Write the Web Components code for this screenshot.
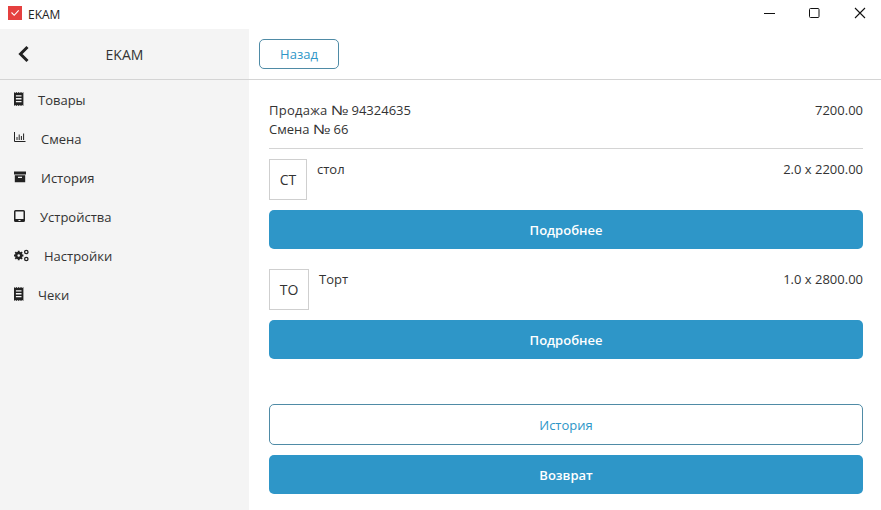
<!DOCTYPE html>
<html lang="ru">
<head>
<meta charset="utf-8">
<title>EKAM</title>
<style>
  html, body { margin: 0; height: 100%; background: #fff; }
  body { font-family: "Open Sans", "Liberation Sans", sans-serif; color: #333; overflow: hidden; }
</style>
</head>
<body>
<ekam-app></ekam-app>

<script>
const ICONS = {
  receipt: '<path fill="#222" fill-rule="evenodd" d="M0 0l1.200 1L2.400 0l1.100 1L4.700 0l1.200 1L7 0l1.200 1L9.400 0v14l-1.200-1L7 14l-1.100-1-1.200 1-1.200-1-1.100 1-1.200-1L0 14zM1.900 3.200v1.300h5.600V3.200zm0 2.900v1.300h5.600V6.100zm0 2.900v1.300h5.600V9z"/>',
  chart: '<path fill="none" stroke="#222" stroke-width="1" d="M.5 1v9.500H11.500M3 6v3M5.200 3.500V9M7.400 5v4M9.600 2.500V9"/>',
  archive: '<path fill="#222" fill-rule="evenodd" d="M0 1.500h12v3H0zM.8 5.300h10.400v7H.8zM4 6.800v1.200h4V6.800z"/>',
  tablet: '<path fill="#222" fill-rule="evenodd" d="M1.500 1h8A1.500 1.500 0 0 1 11 2.500v9A1.500 1.500 0 0 1 9.500 13h-8A1.500 1.500 0 0 1 0 11.500v-9A1.500 1.500 0 0 1 1.500 1zm0 1.500V10h8V2.500zM4.500 11v.9h2V11z"/>',
  cogs: '<g fill="none" stroke="#222"><circle cx="4.700" cy="7.500" r="2.500" stroke-width="2.400"/><path stroke-width="1.800" d="M4.700 2.700v1.400M4.700 10.900v1.400M0 7.500h1.400M8 7.500h1.400M1.300 4.100l1 1M7.100 9.900l1 1M1.300 10.900l1-1M7.100 5.100l1-1"/><circle cx="12.300" cy="4" r="1.700" stroke-width="1.300"/><circle cx="12.300" cy="11" r="1.700" stroke-width="1.300"/></g>'
};

class EkamTitlebar extends HTMLElement {
  connectedCallback() {
    this.attachShadow({ mode: 'open' });
    this.shadowRoot.innerHTML = `
      <style>
        :host { display: flex; align-items: center; height: 29px; box-sizing: border-box; padding-bottom: 1px; background: #fff; font-size: 12px; color: #222; }
        .logo { width: 14px; height: 14px; margin: -2px 6px 0 8px; }
        .title { flex: 1; }
        .ctl { display: flex; margin-bottom: -1px; }
        svg.b { display: block; width: 46px; height: 29px; }
      </style>
      <svg class="logo" viewBox="0 0 14 14"><rect width="14" height="14" fill="#e5403f"/><path d="M3.500 6.500l2.700 2.800 4.500-5" fill="none" stroke="#fff" stroke-width="1.100"/></svg>
      <span class="title">EKAM</span>
      <div class="ctl">
        <svg class="b" viewBox="0 0 46 29"><path d="M21 13.500h11" stroke="#111" fill="none"/></svg>
        <svg class="b" viewBox="0 0 46 29"><rect x="20.500" y="8.500" width="9.500" height="9" rx="1" stroke="#111" fill="none"/></svg>
        <svg class="b" viewBox="0 0 46 29"><path d="M20 8l10 10M30 8L20 18" stroke="#111" fill="none" stroke-width="1.100"/></svg>
      </div>`;
  }
}

class EkamNavItem extends HTMLElement {
  connectedCallback() {
    const icon = ICONS[this.getAttribute('icon')] || '';
    const gap = this.getAttribute('gap') || 18;
    this.attachShadow({ mode: 'open' });
    this.shadowRoot.innerHTML = `
      <style>
        :host { display: flex; align-items: center; height: 39px; padding-left: 14px; font-size: 13px; color: #333; }
        svg { width: 15px; height: 14px; flex: none; margin-top: -2px; margin-right: ${gap}px; }
      </style>
      <svg viewBox="0 0 15 14">${icon}</svg><slot></slot>`;
  }
}

class EkamSidebar extends HTMLElement {
  connectedCallback() {
    this.attachShadow({ mode: 'open' });
    this.shadowRoot.innerHTML = `
      <style>
        :host { display: flex; flex-direction: column; width: 249px; flex: none; background: #f4f4f4; }
        header { display: flex; align-items: center; justify-content: center; position: relative; height: 51px; box-sizing: border-box; border-bottom: 1px solid #d4d4d4; font-size: 14px; color: #333; }
        header svg { position: absolute; left: 17px; top: 16px; width: 13px; height: 18px; }
      </style>
      <header>
        <svg viewBox="0 0 13 18"><path d="M10.500 2L3.500 9l7 7" fill="none" stroke="#222" stroke-width="3"/></svg>
        EKAM
      </header>
      <slot></slot>`;
  }
}

class EkamButton extends HTMLElement {
  connectedCallback() {
    this.attachShadow({ mode: 'open' });
    this.shadowRoot.innerHTML = `
      <style>
        :host { display: block; font-size: 13px; }
        div { display: flex; align-items: center; justify-content: center; height: 39px; border-radius: 5px; background: #2e96c8; color: #fff; font-weight: 600; box-sizing: border-box; }
        :host([outline]) div { height: 41px; background: #fff; border: 1px solid #4f8ba6; color: #2e96c8; font-weight: 400; }
        :host([small]) div { height: 30px; width: 80px; }
      </style>
      <div><slot></slot></div>`;
  }
}

class EkamProduct extends HTMLElement {
  connectedCallback() {
    const w = this.getAttribute('box') || 38;
    this.attachShadow({ mode: 'open' });
    this.shadowRoot.innerHTML = `
      <style>
        :host { display: block; font-size: 13px; color: #333; }
        .row { display: flex; align-items: flex-start; margin-bottom: 10px; }
        .box { width: ${w}px; height: 41px; box-sizing: border-box; border: 1px solid #cfcfcf; display: flex; align-items: center; justify-content: center; font-size: 14px; margin-right: 10px; }
        .name { flex: 1; line-height: 19px; margin-top: 1px; }
        .qty { line-height: 19px; margin-top: 1px; }
      </style>
      <div class="row">
        <div class="box">${this.getAttribute('code')}</div>
        <div class="name">${this.getAttribute('name')}</div>
        <div class="qty">${this.getAttribute('qty')}</div>
      </div>
      <ekam-button>Подробнее</ekam-button>`;
  }
}

class EkamSale extends HTMLElement {
  connectedCallback() {
    this.attachShadow({ mode: 'open' });
    this.shadowRoot.innerHTML = `
      <style>
        :host { display: flex; flex-direction: column; flex: 1; min-width: 0; font-size: 13px; color: #333; }
        .top { height: 51px; box-sizing: border-box; padding: 10px; border-bottom: 1px solid #d4d4d4; }
        .body { padding: 21px 18px 0 20px; }
        .sale { display: flex; justify-content: space-between; line-height: 19px; padding-bottom: 9px; border-bottom: 1px solid #d4d4d4; margin-bottom: 10px; }
        .wide { letter-spacing: .25px; }
        .no { display: inline-block; transform: scaleX(1.35); transform-origin: left; margin-right: 4px; }
        ekam-product { margin-bottom: 20px; }
        .actions { display: flex; flex-direction: column; gap: 10px; margin-top: 45px; }
      </style>
      <div class="top"><ekam-button outline small>Назад</ekam-button></div>
      <div class="body">
        <div class="sale">
          <div><span class="wide">Продажа</span> <span class="no">№</span> 94324635<br>Смена <span class="no">№</span> 66</div>
          <div>7200.00</div>
        </div>
        <ekam-product code="СТ" name="стол" qty="2.0 x 2200.00"></ekam-product>
        <ekam-product code="ТО" name="Торт" qty="1.0 x 2800.00" box="40"></ekam-product>
        <div class="actions">
          <ekam-button outline>История</ekam-button>
          <ekam-button>Возврат</ekam-button>
        </div>
      </div>`;
  }
}

class EkamApp extends HTMLElement {
  connectedCallback() {
    this.attachShadow({ mode: 'open' });
    this.shadowRoot.innerHTML = `
      <style>
        :host { display: flex; flex-direction: column; width: 881px; height: 510px; }
        .main { display: flex; flex: 1; min-height: 0; }
      </style>
      <ekam-titlebar></ekam-titlebar>
      <div class="main">
        <ekam-sidebar>
          <ekam-nav-item icon="receipt" gap="9">Товары</ekam-nav-item>
          <ekam-nav-item icon="chart" gap="12">Смена</ekam-nav-item>
          <ekam-nav-item icon="archive" gap="12">История</ekam-nav-item>
          <ekam-nav-item icon="tablet" gap="11">Устройства</ekam-nav-item>
          <ekam-nav-item icon="cogs" gap="15">Настройки</ekam-nav-item>
          <ekam-nav-item icon="receipt" gap="9">Чеки</ekam-nav-item>
        </ekam-sidebar>
        <ekam-sale></ekam-sale>
      </div>`;
  }
}

customElements.define('ekam-titlebar', EkamTitlebar);
customElements.define('ekam-nav-item', EkamNavItem);
customElements.define('ekam-sidebar', EkamSidebar);
customElements.define('ekam-button', EkamButton);
customElements.define('ekam-product', EkamProduct);
customElements.define('ekam-sale', EkamSale);
customElements.define('ekam-app', EkamApp);
</script>
</body>
</html>
